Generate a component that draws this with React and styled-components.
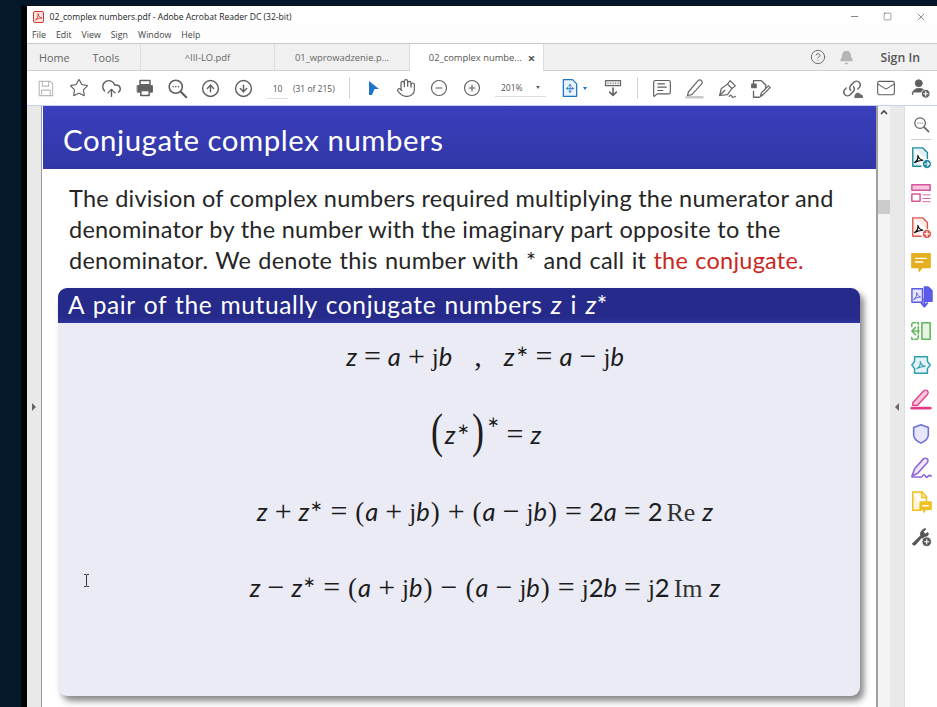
import React from "react";
import styled, { createGlobalStyle } from "styled-components";
import { Star, CloudUpload, CircleArrowUp, CircleArrowDown, Hand, CircleMinus, CirclePlus, Mail, CircleHelp, Bell, Minus, Square, X, MessageSquareText } from "lucide-react";

const Global = createGlobalStyle`
  html, body { margin: 0; padding: 0; height: 100%; overflow: hidden; background: #04172b; }
  #root { height: 100%; }
  * { box-sizing: border-box; }
`;

const UI = `"Open Sans", "Noto Sans", sans-serif`;
const SLIDE = `Lato, "Open Sans", sans-serif`;
const SERIF = `"Liberation Serif", serif`;

const Desktop = styled.div`
  width: 937px; height: 707px; background: #04172b; display: flex; padding: 5px 0 0 21px; overflow: hidden; position: relative;
`;
const WindowFrame = styled.div`
  flex: 1; min-width: 0; display: flex; flex-direction: column; background: #fff; border-left: 6px solid #020408; border-top: 1px solid #111;
`;
const TitleBar = styled.div`
  height: 19px; display: flex; align-items: center; padding: 2px 0 0 6px; background: #fff; flex: none; gap: 1.5px;
`;
const TitleText = styled.span`
  font: 8.55px ${UI}; color: #222; margin-left: 4px; white-space: nowrap; flex: 1; padding-top: 1px;
`;
const WinButton = styled.span`
  width: 32px; display: flex; justify-content: center; align-items: center; color: #333;
`;
const MenuBar = styled.div`
  height: 18px; display: flex; align-items: center; padding: 2px 0 0 5px; gap: 10px; flex: none; background: #fdfdfd;
`;
const MenuItem = styled.span`
  font: 8.8px ${UI}; color: #444;
`;
const TabBar = styled.div`
  height: 28px; background: #f0f0f0; border-top: 1px solid #c9c9c9; border-bottom: 1px solid #d2d2d2; display: flex; align-items: stretch; flex: none;
`;
const HomeTools = styled.div`
  width: 114px; display: flex; align-items: center; gap: 23px; padding-left: 12px; border-right: 1px solid #dcdcdc; flex: none;
`;
const NavLink = styled.span`
  font: 10.8px ${UI}; color: #666;
`;
const Tab = styled.div`
  width: ${p => p.$w}px; flex: none; display: flex; align-items: center; justify-content: center; gap: 6px;
  font: 9.4px ${UI}; color: ${p => p.$active ? "#555" : "#666"}; white-space: nowrap;
  background: ${p => p.$active ? "#fff" : "transparent"};
  border-right: 1px solid #dcdcdc;
  margin-bottom: ${p => p.$active ? "-1px" : "0"};
  padding-left: ${p => p.$active ? "11px" : "0"};
`;
const TabClose = styled.span`
  font: bold 13px ${UI}; color: #555;
`;
const TabSpacer = styled.div`
  flex: 1;
`;
const TabRight = styled.div`
  display: flex; align-items: center; padding-right: 17px;
`;
const SignIn = styled.span`
  font: 600 12.3px ${UI}; color: #555; margin-left: 26px;
`;
const TabIconGap = styled.span`
  display: flex; margin-left: 13.5px;
`;
const Toolbar = styled.div`
  height: 34px; display: flex; align-items: center; padding-left: 2px; flex: none; background: #fff;
`;
const Slot = styled.span`
  width: ${p => p.$w || 33}px; flex: none; display: flex; align-items: center; justify-content: center; color: #5f5f5f;
`;
const PageInput = styled.span`
  width: 33px; flex: none; text-align: center; font: 8.5px/17px ${UI}; color: #555; padding-left: 2px; position: relative;
  &::after { content: ""; position: absolute; left: 7px; right: 5px; bottom: -2px; height: 1px; background: #ddd; }
`;
const PageCount = styled.span`
  width: 50px; flex: none; font: 8.5px ${UI}; color: #555; text-align: left;
`;
const ToolDivider = styled.span`
  width: 1px; height: 22px; background: #d5d5d5; flex: none; margin: 0 ${p => p.$r || 0}px 0 ${p => p.$l || 0}px;
`;
const ZoomBox = styled.span`
  width: 51px; flex: none; display: flex; justify-content: space-between; align-items: center; font: 8.5px/17px ${UI}; color: #555; border-bottom: 1px solid #ddd; padding: 0 6px 0 6px; margin: 0 14px 0 7px;
`;
const Caret = styled.span`
  width: 0; height: 0; border-left: 2.5px solid transparent; border-right: 2.5px solid transparent; border-top: 3px solid ${p => p.$c || "#666"}; flex: none;
`;
const ToolSpacer = styled.span`
  flex: 1;
`;
const Body = styled.div`
  flex: 1; min-height: 0; display: flex; border-top: 1px solid #c8d0f0;
`;
const LeftRail = styled.div`
  width: 15px; flex: none; background: #e9e9e9; border-right: 1px solid #9a9a9a; display: flex; align-items: center; justify-content: center;
`;
const RailArrow = styled.span`
  width: 0; height: 0; border-top: 4px solid transparent; border-bottom: 4px solid transparent;
  ${p => p.$left ? "border-right: 4px solid #666;" : "border-left: 4px solid #666;"}
`;
const Page = styled.div`
  width: 836px; flex: none; background: #fff; display: flex; flex-direction: column; overflow: hidden; border-right: 2px solid #a0a0a0; padding-left: 1px;
`;
const Header = styled.div`
  height: 63px; flex: none; background: linear-gradient(#3a3fbc, #3136a6); display: flex; align-items: center; padding: 3px 0 0 20px;
`;
const HeaderTitle = styled.h1`
  margin: 0; font: 400 29.4px ${SLIDE}; color: #fff; letter-spacing: 0.55px;
`;
const Paragraph = styled.p`
  margin: 14px 0 0; padding-left: 26px; font: 400 23.5px/31px ${SLIDE}; color: #262626; white-space: nowrap; letter-spacing: 0.23px; height: 93px; flex: none;
`;
const Line = styled.span`
  display: block; word-spacing: ${p => p.$ws || 0}px;
`;
const Red = styled.span`
  color: #c9281e;
`;
const Block = styled.section`
  margin: 12px 16px 0 15px; flex: none; height: 408px; border-radius: 9px; display: flex; flex-direction: column; overflow: hidden;
  background: #ebebf5; box-shadow: 4px 5px 6px rgba(40,40,40,.55);
`;
const BlockTitle = styled.div`
  height: 35px; flex: none; background: linear-gradient(#262b8b 85%, #2f33a0); color: #fff; font: 400 24.5px/33px ${SLIDE}; padding-left: 10px; white-space: nowrap; letter-spacing: 0.6px; word-spacing: 1.5px;
`;
const BlockBody = styled.div`
  flex: none; height: 373px; display: flex; flex-direction: column; padding: 12px 0 0 52px; position: relative;
`;
const Equation = styled.div`
  height: ${p => p.$h}px; flex: none; line-height: ${p => p.$h}px; text-align: center; font-family: ${SERIF}; font-size: 25px; color: #1c1c1c; white-space: nowrap;
`;
const V = styled.i`
  font: italic 400 25.5px ${SLIDE};
`;
const Op = styled.span`
  font: 30px ${SERIF}; margin: 0 ${p => p.$m ?? 7}px;
`;
const Paren = styled.span`
  font: 27px ${SERIF}; margin: 0 1px;
`;
const Sup = styled.span`
  font: 15px ${SERIF}; position: relative; top: ${p => p.$top ?? -10}px; line-height: 0; margin-left: 1px;
`;
const Num = styled.span`
  font: 400 25.5px ${SLIDE};
`;
const Func = styled.span`
  font: 26px ${SERIF}; margin: 0 7px 0 4px; color: #333;
`;
const BigParen = styled.span`
  font: 48px/1 ${SERIF}; display: inline-block; transform: scaleX(.75); position: relative; top: 3px;
`;
const IBeam = styled.span`
  position: absolute; left: 25px; top: 251px; color: #333; display: flex;
`;
const ScrollTrack = styled.div`
  width: 12px; flex: none; background: #f4f4f4; display: flex; flex-direction: column; align-items: center; position: relative;
`;
const ScrollUp = styled.span`
  margin-top: 3px; display: flex;
`;
const ScrollThumb = styled.span`
  position: absolute; top: 94px; left: 0; width: 12px; height: 14px; background: #cccccc;
`;
const SideStrip = styled.div`
  width: 15px; flex: none; background: #e9e9e9; display: flex; align-items: center; justify-content: center; border-right: 1px solid #dedede; padding-right: 1px;
`;
const ToolRail = styled.div`
  flex: 1; background: #fff; display: flex; flex-direction: column; align-items: center; padding-top: 7px;
`;
const RailButton = styled.span`
  height: ${p => p.$h || 34.35}px; flex: none; display: flex; align-items: center; justify-content: center; color: ${p => p.$c || "inherit"};
`;
const RailDivider = styled.span`
  width: 20px; height: 1px; background: #cfcfcf; flex: none; margin: 4px 0 0;
`;

const G = ({ s = 22, children, fill = "none", stroke = "currentColor", w = 1.6 }) => (
  <svg width={s} height={s} viewBox="0 0 24 24" fill={fill} stroke={stroke} strokeWidth={w} strokeLinecap="round" strokeLinejoin="round" style={{ flex: "none" }}>{children}</svg>
);
const Acro = ({ c = "currentColor" }) => <path d="M5 17c2.500-1.500 4-5 3.600-8 .6 3 2.800 5 5.600 5.400-3.400.2-6.600 1-9.200 2.600z" stroke={c} strokeWidth="1.200" fill="none" />;
const PdfLogo = () => (
  <svg width="11" height="12" viewBox="0 0 11 12" style={{ flex: "none" }}>
    <rect x=".5" y=".5" width="10" height="11" rx="1.500" fill="#fbe5e0" stroke="#d7372b" />
    <path d="M2.500 9C4 8 5.500 5.500 5 2.500c.5 2.500 1.500 4 4 4.500-2.500 0-4.500.5-6.500 2z" fill="none" stroke="#d7372b" strokeWidth=".9" />
  </svg>
);
const SaveIco = () => <G s={19} stroke="#b9b9b9" w={1.4}><path d="M4 3h14l3 3v15H4z" /><path d="M8 3v6h8V3M7 21v-7h11v7" /></G>;
const PrintIco = () => (
  <G s={20} fill="#5f5f5f" stroke="#5f5f5f" w={1}>
    <path d="M6 3h12v5H6z" fill="#fff" strokeWidth="1.800" />
    <path d="M3 9h18v8h-3v-3H6v3H3z" />
    <path d="M7 15h10v6H7z" fill="#fff" strokeWidth="1.800" />
  </G>
);
const SearchDots = ({ s = 21 }) => (
  <G s={s} w={1.8}>
    <circle cx="10" cy="10" r="7.500" />
    <path d="M16 16l6 6" strokeWidth="2.400" />
    <path d="M7 10h.1M10 10h.1M13 10h.1" strokeWidth="1.800" />
  </G>
);
const Pointer = () => <svg width="14" height="17" viewBox="0 0 14 17"><path d="M2 1l10 8H7.500L5 15 2 15z" fill="#1f73c9" /></svg>;
const FitIco = () => (
  <G s={20} stroke="#1f73c9" w={1.5}>
    <path d="M4 2h11l5 5v15H4z" fill="#e8f2fb" />
    <path d="M12 8v9M8 12.500h8M12 8l-1.500 1.500M12 8l1.500 1.500M12 17l-1.500-1.500M12 17l1.500-1.500M8 12.500l1.500-1.500M8 12.500L9.500 14M16 12.500L14.500 11M16 12.500L14.500 14" strokeWidth="1" />
  </G>
);
const ReadIco = () => (
  <G s={20} w={1.5} stroke="#666">
    <path d="M3 3h18v6H3z" fill="#eee" />
    <path d="M6 6h.1M9 6h.1M12 6h.1M15 6h.1M18 6h.1" />
    <path d="M12 12v9M8 17l4 4 4-4" strokeWidth="2" />
  </G>
);
const Highlight = () => (
  <G s={21} stroke="#6a6a6a" w={1.4}>
    <path d="M5 16L16 3c1-1 3-1 4 0s1 2.500 0 4L9 19l-5 1z" />
    <path d="M3 22h18" stroke="#c9c9c9" strokeWidth="3" />
  </G>
);
const SignPen = () => (
  <G s={21} stroke="#666" w={1.4}>
    <path d="M3 20l2-8 7-5 5 5-5 7z" /><path d="M12 7l3-4 6 6-4 3M3 20l6-6" /><path d="M14 21c1-2 2-2 3 0s2 1 4 0" />
  </G>
);
const StampEdit = () => (
  <G s={21} stroke="#666" w={1.5}>
    <path d="M4 7V3h9l5 5v3" /><path d="M2 7h5v4H2z" fill="#666" /><path d="M4 15v7h7" /><path d="M12 21l1-4 8-8 2 2-8 8z" />
  </G>
);
const LinkCloud = () => (
  <G s={23} stroke="#6a6a6a" w={1.5}>
    <path d="M10 14a4 4 0 0 1 0-5l4-4a4 4 0 0 1 5.500 5.500l-2 2" />
    <path d="M13 10a4 4 0 0 1 0 5l-4 4A4 4 0 0 1 3.500 13.500l2-2" />
    <path d="M14 22h9c0-3-1-4-3-4-1-2-4-2-5 0-1 .5-1 2-1 4z" fill="#6a6a6a" stroke="none" />
  </G>
);
const UserAdd = () => (
  <G s={21} fill="#5f5f5f" stroke="#5f5f5f" w={1}>
    <circle cx="10" cy="6" r="4" />
    <path d="M3 19c0-5 3-7 7-7s7 1 7 4H3z" />
    <circle cx="18" cy="18" r="5" stroke="#fff" strokeWidth="1" />
    <path d="M18 15.500v5M15.500 18h5" stroke="#fff" strokeWidth="1.300" />
  </G>
);
const Badge = ({ c, plus }) => (
  <>
    <circle cx="18.500" cy="18.500" r="5" fill={c} stroke="#fff" strokeWidth="1" />
    {plus
      ? <path d="M18.500 16v5M16 18.500h5" stroke="#fff" strokeWidth="1.400" />
      : <path d="M16 18.500h5M19 16.500l2 2-2 2" stroke="#fff" strokeWidth="1.200" />}
  </>
);
const ExportPdf = () => <G s={22} stroke="#1f8a9e" w={1.5}><path d="M3 1h11l5 5v8M3 1v20h9" fill="#e2f1f4" /><Acro /><Badge c="#1f8a9e" /></G>;
const Organize = () => (
  <G s={22} stroke="#d9559a" w={1.6}>
    <path d="M2 3h20v6H2z" fill="#f4c7dd" /><path d="M2 13h9v8H2z" /><path d="M14 14h8M14 18h8M14 21.500h8" strokeWidth="1" />
  </G>
);
const CreatePdf = () => <G s={22} stroke="#e0564c" w={1.5}><path d="M3 1h11l5 5v8M3 1v20h9" fill="#fdeceb" /><Acro /><Badge c="#e0564c" plus /></G>;
const CommentFill = () => (
  <G s={22} fill="#e5b020" stroke="#e5b020" w={1.5}><path d="M2 3h20v15H13l-3 4v-4H2z" /><path d="M6 8h12M6 12h8" stroke="#fff" /></G>
);
const Combine = () => (
  <G s={23} stroke="#5b5be8" w={1.5}>
    <path d="M2 4h11v14H2z" fill="#e7e7fb" /><path d="M15 2h4l4 4v11h-8z" fill="#5b5be8" /><path d="M4 15c2-1 3.500-4 3-7 .5 2.500 2 4 4 4.500-2.500.2-5 1-7 2.500z" strokeWidth="1" /><path d="M15 14v8M12 19l3 3.500 3-3.500" strokeWidth="2" />
  </G>
);
const Compare = () => (
  <G s={22} stroke="#63b75d" w={1.7}><path d="M13 3h9v18h-9z" fill="#e5f4e3" /><path d="M2 7V3h7v18H2v-4" strokeDasharray="3 2" /><path d="M2 12h8M6 8l-4 4 4 4" /></G>
);
const Compress = () => (
  <G s={22} stroke="#2a9db0" w={1.6}>
    <path d="M5 3h14v5l3 4-3 4v5H5v-5l-3-4 3-4z" fill="#e3f3f6" /><path d="M7.500 16c2.500-1.500 4-5 3.600-8 .6 3 2.800 5 5.600 5.400-3.400.2-6.600 1-9.200 2.600z" strokeWidth="1.100" />
  </G>
);
const PinkPen = () => (
  <G s={22} stroke="#e23e87" w={1.5}><path d="M3 16L15 3c1-1 3-1 4 0s1 3 0 4L8 19H3z" fill="#f7c6dc" /><path d="M2 22h20" strokeWidth="3" /></G>
);
const ShieldIco = () => <G s={22} stroke="#6a6ee0" w={1.7}><path d="M12 2l8 3v8c0 4-4 7-8 9-4-2-8-5-8-9V5z" fill="#e6e7fb" /></G>;
const PurplePen = () => (
  <G s={23} stroke="#8d63d8" w={1.6}><path d="M2 21l3-8 9-10c1-1 3-1 4 0s1 3 0 4L8 18z" fill="#eee6fb" /><path d="M2 22h10M13 21c1-2 2-2 3 0s2 1 3 0 2-1 3 0" /></G>
);
const DocNote = () => (
  <G s={22} stroke="#f0c020" w={1.6}><path d="M3 1h10l5 5v5M3 1v20h9" fill="#fdf6d8" /><path d="M13 1v6h5" /><path d="M11 12h12v8h-6l-2 3v-3h-4z" fill="#f0c020" /><path d="M14 16h6" stroke="#fff" /></G>
);
const WrenchAdd = () => (
  <G s={21} fill="#555" stroke="#555" w={1}>
    <path d="M2 20l9-9c-1-3 1-7 5-8l1 .5-3 3 2 3 3-2 1 1c-1 4-4 6-8 5l-7 8c-1 1-4 0-3-1.500z" />
    <circle cx="18" cy="18" r="5.500" stroke="#fff" />
    <path d="M18 15.500v5M15.500 18h5" stroke="#fff" strokeWidth="1.300" />
  </G>
);

const TOOLS_LEFT = [
  <SaveIco key="a" />,
  <Star key="b" size={20} strokeWidth={1.4} />,
  <CloudUpload key="c" size={21} strokeWidth={1.6} />,
  <PrintIco key="d" />,
  <SearchDots key="e" />,
  <CircleArrowUp key="f" size={19} strokeWidth={1.8} />,
  <CircleArrowDown key="g" size={19} strokeWidth={1.8} />,
];

const RAIL = [Organize, CreatePdf, CommentFill, Combine, Compare, Compress, PinkPen, ShieldIco, PurplePen, DocNote, WrenchAdd];

export default function App() {
  return (
    <>
      <Global />
      <Desktop>
        <WindowFrame>
          <TitleBar>
            <PdfLogo />
            <TitleText>02_complex numbers.pdf - Adobe Acrobat Reader DC (32-bit)</TitleText>
            <WinButton><Minus size={11} strokeWidth={1.3} /></WinButton>
            <WinButton><Square size={9} strokeWidth={1.2} /></WinButton>
            <WinButton><X size={12} strokeWidth={1.1} /></WinButton>
          </TitleBar>
          <MenuBar>
            {["File", "Edit", "View", "Sign", "Window", "Help"].map(m => <MenuItem key={m}>{m}</MenuItem>)}
          </MenuBar>
          <TabBar>
            <HomeTools><NavLink>Home</NavLink><NavLink>Tools</NavLink></HomeTools>
            <Tab $w={134}>^III-LO.pdf</Tab>
            <Tab $w={135}>01_wprowadzenie.p...</Tab>
            <Tab $w={134} $active>02_complex numbe...<TabClose>×</TabClose></Tab>
            <TabSpacer />
            <TabRight>
              <CircleHelp size={16} strokeWidth={1.4} color="#666" />
              <TabIconGap><Bell size={15} color="#b5b5b5" fill="#b5b5b5" /></TabIconGap>
              <SignIn>Sign In</SignIn>
            </TabRight>
          </TabBar>
          <Toolbar>
            {TOOLS_LEFT.map((t, i) => <Slot key={i}>{t}</Slot>)}
            <PageInput>10</PageInput>
            <PageCount>(31 of 215)</PageCount>
            <ToolDivider $l={6} $r={8} />
            <Slot $w={32}><Pointer /></Slot>
            <Slot $w={32}><Hand size={20} strokeWidth={1.4} /></Slot>
            <Slot $w={33}><CircleMinus size={18} strokeWidth={1.5} /></Slot>
            <Slot $w={33}><CirclePlus size={18} strokeWidth={1.5} /></Slot>
            <ZoomBox>201%<Caret /></ZoomBox>
            <FitIco />
            <Slot $w={10}><Caret $c="#1f73c9" /></Slot>
            <Slot $w={46}><ReadIco /></Slot>
            <ToolDivider $l={1} $r={7} />
            <Slot $w={33}><MessageSquareText size={20} strokeWidth={1.4} /></Slot>
            <Slot $w={33}><Highlight /></Slot>
            <Slot $w={33}><SignPen /></Slot>
            <Slot $w={33}><StampEdit /></Slot>
            <ToolSpacer />
            <Slot $w={34}><LinkCloud /></Slot>
            <Slot $w={34}><Mail size={20} strokeWidth={1.3} /></Slot>
            <Slot $w={34}><UserAdd /></Slot>
          </Toolbar>
          <Body>
            <LeftRail><RailArrow /></LeftRail>
            <Page>
              <Header><HeaderTitle>Conjugate complex numbers</HeaderTitle></Header>
              <Paragraph>
                <Line>The division of complex numbers required multiplying the numerator and</Line>
                <Line $ws={0.2}>denominator by the number with the imaginary part opposite to the</Line>
                <Line $ws={1}>denominator. We denote this number with * and call it <Red>the conjugate.</Red></Line>
              </Paragraph>
              <Block>
                <BlockTitle>A pair of the mutually conjugate numbers <V>z</V> i <V>z</V>*</BlockTitle>
                <BlockBody>
                  <Equation $h={45}>
                    <V>z</V><Op>=</Op><V>a</V><Op>+</Op>j<V>b</V>
                    <Op $m={22}>,</Op>
                    <V>z</V><Sup>∗</Sup><Op>=</Op><V>a</V><Op>−</Op>j<V>b</V>
                  </Equation>
                  <Equation $h={112}>
                    <BigParen>(</BigParen><V>z</V><Sup>∗</Sup><BigParen>)</BigParen><Sup $top={-17}>∗</Sup><Op>=</Op><V>z</V>
                  </Equation>
                  <Equation $h={41}>
                    <V>z</V><Op>+</Op><V>z</V><Sup>∗</Sup><Op>=</Op><Paren>(</Paren><V>a</V><Op>+</Op>j<V>b</V><Paren>)</Paren><Op>+</Op><Paren>(</Paren><V>a</V><Op>−</Op>j<V>b</V><Paren>)</Paren><Op>=</Op><Num>2</Num><V>a</V><Op>=</Op><Num>2</Num><Func>Re</Func><V>z</V>
                  </Equation>
                  <Equation $h={112}>
                    <V>z</V><Op>−</Op><V>z</V><Sup>∗</Sup><Op>=</Op><Paren>(</Paren><V>a</V><Op>+</Op>j<V>b</V><Paren>)</Paren><Op>−</Op><Paren>(</Paren><V>a</V><Op>−</Op>j<V>b</V><Paren>)</Paren><Op>=</Op>j<Num>2</Num><V>b</V><Op>=</Op>j<Num>2</Num><Func>Im</Func><V>z</V>
                  </Equation>
                  <IBeam>
                    <svg width="7" height="13" viewBox="0 0 7 13" fill="none" stroke="#333"><path d="M1 .5h2l.5 1 .5-1h2M3.500 1.500v10M1 12.500h2l.5-1 .5 1h2" /></svg>
                  </IBeam>
                </BlockBody>
              </Block>
            </Page>
            <ScrollTrack>
              <ScrollUp><svg width="8" height="6" viewBox="0 0 8 6" fill="none" stroke="#444" strokeWidth="1.600"><path d="M1 5l3-3 3 3" /></svg></ScrollUp>
              <ScrollThumb />
            </ScrollTrack>
            <SideStrip><RailArrow $left /></SideStrip>
            <ToolRail>
              <RailButton $h={22} $c="#666"><SearchDots s={17} /></RailButton>
              <RailDivider />
              <RailButton $h={36}><ExportPdf /></RailButton>
              {RAIL.map((I, i) => <RailButton key={i}><I /></RailButton>)}
            </ToolRail>
          </Body>
        </WindowFrame>
      </Desktop>
    </>
  );
}
